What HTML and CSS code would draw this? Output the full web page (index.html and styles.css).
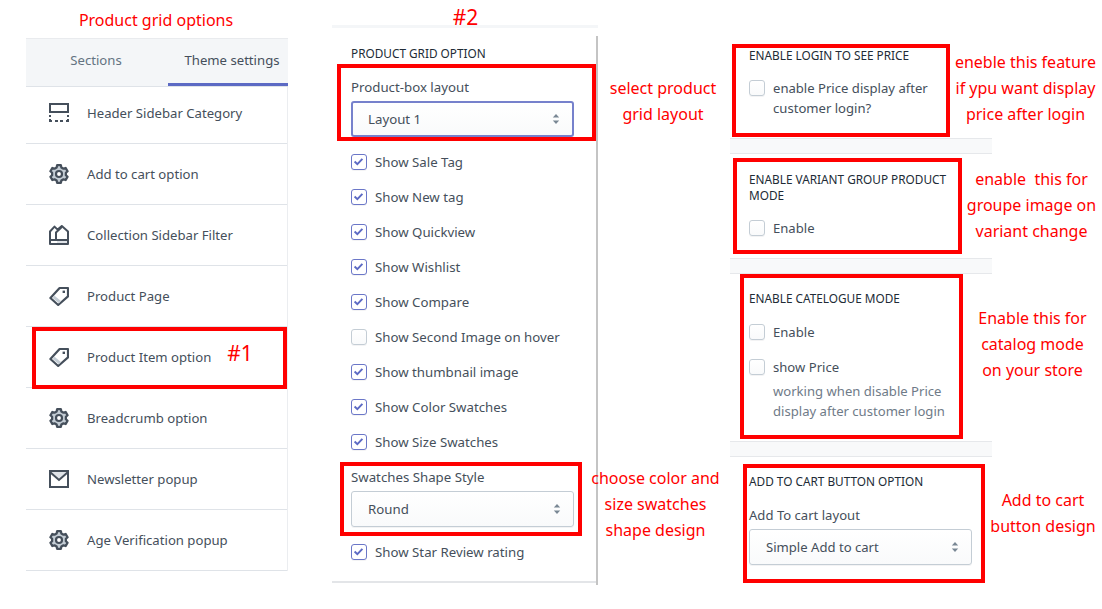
FILE: index.html
```html
<!DOCTYPE html>
<html lang="en">
<head>
<meta charset="utf-8">
<title>Product grid options</title>
<link rel="stylesheet" href="styles.css">
</head>
<body>
<svg class="defs" width="0" height="0" aria-hidden="true">
  <symbol id="i-gear" viewBox="0 0 20 20">
    <path d="M8.13 1.2H11.87L12.39 3.42 14.5 4.64 16.69 3.98 18.56 7.22 16.89 8.78V11.22L18.56 12.78 16.69 16.02 14.5 15.36 12.39 16.58 11.87 18.8H8.13L7.61 16.58 5.5 15.36 3.31 16.02 1.44 12.78 3.11 11.22V8.78L1.44 7.22 3.31 3.98 5.5 4.64 7.61 3.42Z" fill="#c4cdd5" stroke="#454f5b" stroke-width="2.3" stroke-linejoin="round"/>
    <circle cx="10" cy="10" r="3" fill="#fff" stroke="#454f5b" stroke-width="2.2"/>
  </symbol>
  <symbol id="i-tag" viewBox="0 0 20 20">
    <path d="M1.4 12 10.6 2H19V10.4L9.2 19 1.4 12Z" fill="#fff" stroke="#454f5b" stroke-width="2.2" stroke-linejoin="round"/>
    <path d="M4.6 10.8 11 16.2" fill="none" stroke="#c4cdd5" stroke-width="3"/>
    <rect x="13.6" y="4.6" width="2.4" height="2.4" fill="#454f5b"/>
  </symbol>
  <symbol id="i-layout" viewBox="0 0 20 20">
    <rect x="1" y="1" width="18" height="8" fill="#fff" stroke="#454f5b" stroke-width="2"/>
    <path d="M1 12v2M19 12v2M0 18h3M6 18h3M11 18h3M17 18h3M1 16v2M19 16v2" stroke="#454f5b" stroke-width="2" fill="none"/>
  </symbol>
  <symbol id="i-collection" viewBox="0 0 20 20">
    <path d="M1 19V6.5L5.5 1.6 8.6 4.6 12.8 1 19 6.5V19Z" fill="#fff" stroke="#454f5b" stroke-width="2" stroke-linejoin="round"/>
    <path d="M7 15V7.4L12.8 2" fill="none" stroke="#454f5b" stroke-width="2"/>
    <path d="M1 15H19" stroke="#454f5b" stroke-width="2"/>
    <rect x="8" y="16" width="10" height="2" fill="#dfe3e8"/>
  </symbol>
  <symbol id="i-mail" viewBox="0 0 20 20">
    <rect x="1" y="2" width="18" height="16" fill="#fff" stroke="#454f5b" stroke-width="2"/>
    <path d="M2 3H18V4L10 11 2 4Z" fill="#dfe3e8"/>
    <path d="M1.5 3.5 10 11 18.5 3.5" fill="none" stroke="#454f5b" stroke-width="2"/>
  </symbol>
  <symbol id="i-updown" viewBox="0 0 8 12">
    <path d="M4 1 7.2 4.6H.8ZM4 11 .8 7.4H7.2Z" fill="#798794"/>
  </symbol>
  <symbol id="i-check" viewBox="0 0 16 16">
    <path d="M3.2 8 6.6 11.2 12.8 4.8" fill="none" stroke="#5c6ac4" stroke-width="2.4"/>
  </symbol>
</svg>

<main class="canvas">
  <nav class="sidebar">
    <div class="tabs">
      <div class="tab">Sections</div>
      <div class="tab tab-active">Theme settings</div>
    </div>
    <ul class="menu">
      <li class="menu-item menu-first"><svg class="icon"><use href="#i-layout"/></svg>Header Sidebar Category</li>
      <li class="menu-item"><svg class="icon"><use href="#i-gear"/></svg>Add to cart option</li>
      <li class="menu-item"><svg class="icon"><use href="#i-collection"/></svg>Collection Sidebar Filter</li>
      <li class="menu-item"><svg class="icon"><use href="#i-tag"/></svg>Product Page</li>
      <li class="menu-item"><svg class="icon"><use href="#i-tag"/></svg>Product Item option</li>
      <li class="menu-item"><svg class="icon"><use href="#i-gear"/></svg>Breadcrumb option</li>
      <li class="menu-item"><svg class="icon"><use href="#i-mail"/></svg>Newsletter popup</li>
      <li class="menu-item"><svg class="icon"><use href="#i-gear"/></svg>Age Verification popup</li>
    </ul>
  </nav>

  <section class="middle">
    <div class="middle-main">
      <h2 class="title">PRODUCT GRID OPTION</h2>
      <div class="label label-first">Product-box layout</div>
      <div class="select select-focus">Layout 1<svg class="updown"><use href="#i-updown"/></svg></div>
      <div class="checks">
        <div class="check"><span class="box box-on"><svg class="tick"><use href="#i-check"/></svg></span>Show Sale Tag</div>
        <div class="check"><span class="box box-on"><svg class="tick"><use href="#i-check"/></svg></span>Show New tag</div>
        <div class="check"><span class="box box-on"><svg class="tick"><use href="#i-check"/></svg></span>Show Quickview</div>
        <div class="check"><span class="box box-on"><svg class="tick"><use href="#i-check"/></svg></span>Show Wishlist</div>
        <div class="check"><span class="box box-on"><svg class="tick"><use href="#i-check"/></svg></span>Show Compare</div>
        <div class="check"><span class="box"></span>Show Second Image on hover</div>
        <div class="check"><span class="box box-on"><svg class="tick"><use href="#i-check"/></svg></span>Show thumbnail image</div>
        <div class="check"><span class="box box-on"><svg class="tick"><use href="#i-check"/></svg></span>Show Color Swatches</div>
        <div class="check"><span class="box box-on"><svg class="tick"><use href="#i-check"/></svg></span>Show Size Swatches</div>
      </div>
      <div class="label label-swatch">Swatches Shape Style</div>
      <div class="select">Round<svg class="updown"><use href="#i-updown"/></svg></div>
      <div class="check check-last"><span class="box box-on"><svg class="tick"><use href="#i-check"/></svg></span>Show Star Review rating</div>
    </div>
    <div class="scrollbar"></div>
  </section>

  <section class="right">
    <div class="block block-login">
      <h2 class="title">ENABLE LOGIN TO SEE PRICE</h2>
      <div class="check check-login"><span class="box"></span><span>enable Price display after customer login?</span></div>
    </div>
    <div class="band"></div>
    <div class="block block-variant">
      <h2 class="title title-wrap">ENABLE VARIANT GROUP PRODUCT MODE</h2>
      <div class="check check-variant"><span class="box"></span>Enable</div>
    </div>
    <div class="band"></div>
    <div class="block block-catalog">
      <h2 class="title">ENABLE CATELOGUE MODE</h2>
      <div class="check check-enable"><span class="box"></span>Enable</div>
      <div class="check check-price"><span class="box"></span>show Price</div>
      <p class="help">working when disable Price display after customer login</p>
    </div>
    <div class="band"></div>
    <div class="block block-cart">
      <h2 class="title">ADD TO CART BUTTON OPTION</h2>
      <div class="label label-cart">Add To cart layout</div>
      <div class="select select-cart">Simple Add to cart<svg class="updown"><use href="#i-updown"/></svg></div>
    </div>
  </section>

  <div class="mark mark-item"></div>
  <div class="mark mark-layout"></div>
  <div class="mark mark-swatch"></div>
  <div class="mark mark-login"></div>
  <div class="mark mark-variant"></div>
  <div class="mark mark-catalog"></div>
  <div class="mark mark-cart"></div>

  <div class="note note-grid">Product grid options</div>
  <div class="note note-num note-1">#1</div>
  <div class="note note-num note-2">#2</div>
  <div class="note note-layout">select product<br>grid layout</div>
  <div class="note note-swatch">choose color and<br>size swatches<br>shape design</div>
  <div class="note note-login">eneble this feature<br>if ypu want display<br>price after login</div>
  <div class="note note-variant">enable&nbsp; this for<br>groupe image on<br>variant change</div>
  <div class="note note-catalog">Enable this for<br>catalog mode<br>on your store</div>
  <div class="note note-cart">Add to cart<br>button design</div>
</main>
</body>
</html>
```
FILE: styles.css
```css
* { box-sizing: border-box; }
html, body { margin: 0; padding: 0; background: #fff; }
body { font-family: "Noto Sans", "Open Sans", sans-serif; color: #212b36; }
.defs { position: absolute; }

.canvas {
  position: relative;
  width: 1102px;
  height: 609px;
  overflow: hidden;
  display: flex;
  align-items: flex-start;
  font-size: 13.25px;
  line-height: 20px;
}

/* left sidebar */
.sidebar {
  width: 262px;
  margin: 38px 0 0 26px;
  border-right: 1px solid #ebedf0;
  font-size: 13.15px;
}
.tabs {
  display: flex;
  height: 49px;
  background: #f4f6f8;
  border-top: 1px solid #e9ebee;
  border-bottom: 1px solid #dfe3e8;
  margin-right: -1px;
}
.tab {
  width: 142px;
  padding: 11px 2px 0 0;
  text-align: center;
  color: #637381;
}
.tab-active {
  width: 120px;
  padding: 11px 0 0 8px;
  border-bottom: 3px solid #5c6ac4;
  color: #454f5b;
}
.menu { list-style: none; margin: 0; padding: 0; }
.menu-item {
  display: flex;
  align-items: center;
  height: 61px;
  padding-left: 23px;
  border-bottom: 1px solid #dfe3e8;
  color: #454f5b;
}
.menu-first { height: 57px; padding-bottom: 4px; }
.icon { width: 20px; height: 20px; margin-right: 18px; flex: none; }

/* middle panel */
.middle {
  display: flex;
  width: 266px;
  margin: 25px 0 0 44px;
  align-items: flex-start;
  border-top: 3px solid #f4f6f8;
}
.middle-main {
  width: 264px;
  height: 555px;
  padding: 17px 0 0 19px;
  border-bottom: 2px solid #e3e5e8;
}
.scrollbar {
  width: 2px;
  height: 549px;
  margin-top: 8px;
  background: #c4c4c4;
}

.title {
  margin: 0;
  font-size: 11.8px;
  font-weight: 400;
  line-height: 17px;
  color: #212b36;
}
.label { color: #454f5b; height: 20px; }
.label-first { margin-top: 15px; }
.label-swatch { margin-top: 15px; }
.label-cart { margin-top: 15px; }

.select {
  position: relative;
  display: flex;
  align-items: center;
  width: 223px;
  height: 36px;
  margin-top: 4px;
  padding-left: 16px;
  background: linear-gradient(#fff, #f9fafb);
  border: 1px solid #c4cdd5;
  border-radius: 3px;
  box-shadow: 0 1px 0 rgba(22, 29, 37, .05);
  color: #454f5b;
}
.select-focus {
  border: 2px solid #7681cc;
  padding-left: 15px;
}
.updown {
  position: absolute;
  right: 12px;
  top: 50%;
  margin-top: -6px;
  width: 8px;
  height: 12px;
}

.checks { display: flex; flex-direction: column; gap: 15px; margin-top: 15px; }
.check { display: flex; color: #454f5b; min-height: 20px; }
.check-last { margin-top: 15px; }
.box {
  width: 16px;
  height: 16px;
  flex: none;
  margin: 2px 8px 0 0;
  border: 1.5px solid #c4cdd5;
  border-radius: 3px;
  background: linear-gradient(#fff, #f9fafb);
  box-shadow: 0 1px 0 rgba(22, 29, 37, .05);
}
.box-on { border-color: #6b77c8; background: #fff; }
.tick { display: block; width: 13px; height: 13px; }

/* right panel */
.right { width: 262px; margin: 47px 0 0 132px; font-size: 13.1px; }
.block { padding-left: 19px; }
.block-login { height: 91px; }
.block-variant { height: 104px; padding-top: 17px; }
.block-catalog { height: 167px; padding-top: 16px; }
.block-cart { padding-top: 16px; }
.title-wrap { width: 225px; line-height: 16px; }
.block-login .title { line-height: 16px; }
.check-login { margin-top: 15px; padding-right: 8px; }
.check-variant { margin-top: 15px; }
.check-enable { margin-top: 15px; }
.check-price { margin-top: 15px; }
.help {
  margin: 4px 0 0 24px;
  color: #6f7b88;
  width: 185px;
}
.select-cart { margin-top: 4px; }
.band {
  height: 16px;
  background: #f8f9fa;
  border-top: 1px solid #e6e8eb;
  border-bottom: 1px solid #e6e8eb;
}

/* red annotation frames */
.mark { position: absolute; border: 4px solid #f00; }
.mark-item    { left: 32px;  top: 327px; width: 255px; height: 62px; }
.mark-layout  { left: 337px; top: 64px;  width: 259px; height: 77px; }
.mark-swatch  { left: 340px; top: 462px; width: 242px; height: 74px; }
.mark-login   { left: 732px; top: 44px;  width: 218px; height: 93px; }
.mark-variant { left: 733px; top: 158px; width: 229px; height: 96px; }
.mark-catalog { left: 740px; top: 274px; width: 223px; height: 165px; }
.mark-cart    { left: 743px; top: 464px; width: 242px; height: 119px; }

/* red annotation text */
.note {
  position: absolute;
  color: #f00;
  font-size: 16px;
  line-height: 26px;
  text-align: center;
  white-space: nowrap;
  transform: translateX(-50%);
}
.note-num { font-size: 21px; }
.note-grid    { left: 156px;  top: 7px; }
.note-1       { left: 240px;  top: 340px; }
.note-2       { left: 465.5px; top: 4px; }
.note-layout  { left: 663px;  top: 75px; }
.note-swatch  { left: 655.5px; top: 465px; }
.note-login   { left: 1025.5px; top: 49px; }
.note-variant { left: 1031.5px; top: 166px; }
.note-catalog { left: 1032.5px; top: 305px; }
.note-cart    { left: 1043px; top: 487px; }
```
